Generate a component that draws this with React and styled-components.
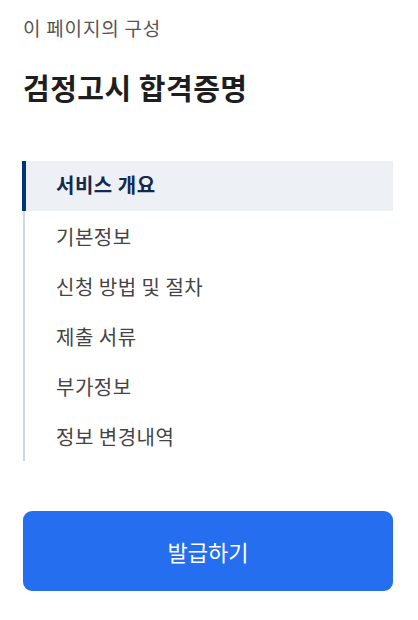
import React from "react";
import styled, { createGlobalStyle } from "styled-components";

const GlobalStyle = createGlobalStyle`
  html, body {
    margin: 0;
    padding: 0;
    background: #ffffff;
  }
  body {
    font-family: "Noto Sans CJK KR", "Noto Sans", sans-serif;
  }
`;

const Page = styled.div`
  width: 370px;
  padding: 14px 25px 0 23px;
`;

const Caption = styled.div`
  font-size: 19px;
  line-height: 28px;
  letter-spacing: 0.8px;
  color: #555555;
`;

const Title = styled.h1`
  margin: 25px 0 0;
  font-size: 29px;
  line-height: 40px;
  letter-spacing: 0.5px;
  font-weight: 700;
  color: #1e1e1e;
`;

const Nav = styled.ul`
  list-style: none;
  margin: 54px 0 0;
  padding: 0;
`;

const Item = styled.li`
  height: 50px;
  display: flex;
  align-items: center;
  box-sizing: border-box;
  font-size: 20px;
  letter-spacing: 0.5px;
  border-left: ${(p) => (p.$active ? "4px solid #003675" : "2px solid #cdd6e1")};
  margin-left: ${(p) => (p.$active ? "-1px" : "0")};
  padding-left: ${(p) => (p.$active ? "30px" : "31px")};
  padding-bottom: ${(p) => (p.$active ? "3px" : "0")};
  background: ${(p) => (p.$active ? "#edf0f4" : "transparent")};
  color: ${(p) => (p.$active ? "#13294d" : "#444444")};
  font-weight: ${(p) => (p.$active ? 700 : 400)};
`;

const Button = styled.button`
  display: block;
  width: 100%;
  height: 80px;
  margin-top: 50px;
  border: 0;
  border-radius: 9px;
  background: #256ef0;
  color: #ffffff;
  font-family: inherit;
  font-size: 22px;
  cursor: pointer;
`;

const items = [
  "서비스 개요",
  "기본정보",
  "신청 방법 및 절차",
  "제출 서류",
  "부가정보",
  "정보 변경내역",
];

const App = () => {
  return (
    <>
      <GlobalStyle />
      <Page>
        <Caption>이 페이지의 구성</Caption>
        <Title>검정고시 합격증명</Title>
        <Nav>
          {items.map((label, i) => (
            <Item key={label} $active={i === 0}>
              {label}
            </Item>
          ))}
        </Nav>
        <Button>발급하기</Button>
      </Page>
    </>
  );
};

export default App;
